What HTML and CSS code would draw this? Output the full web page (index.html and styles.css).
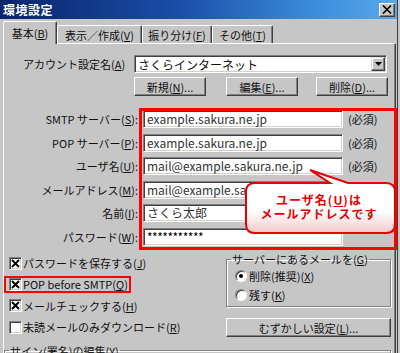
FILE: index.html
```html
<!DOCTYPE html>
<html lang="ja">
<head>
<meta charset="utf-8">
<link rel="stylesheet" href="styles.css">
</head>
<body>
<div class="window">
  <div class="titlebar">
    <span class="title">環境設定</span>
    <span class="close"><svg width="10" height="9" viewBox="0 0 10 9"><path d="M1 0.5 L9 8.5 M9 0.5 L1 8.5" stroke="#000" stroke-width="1.6"/></svg></span>
  </div>
  <div class="tabs">
    <div class="tab sel">基本(<u>B</u>)</div>
    <div class="tab t2">表示／作成(<u>V</u>)</div>
    <div class="tab t3">振り分け(<u>F</u>)</div>
    <div class="tab t4">その他(<u>T</u>)</div>
  </div>
  <div class="panel">
    <div class="acct">
      <span class="acct-label">アカウント設定名(<u>A</u>)</span>
      <div class="combo">
        <span class="combo-text">さくらインターネット</span>
        <span class="dd"><svg width="7" height="4" viewBox="0 0 7 4"><path d="M0 0 H7 L3.5 4 Z" fill="#000"/></svg></span>
      </div>
    </div>
    <div class="btnrow">
      <span class="btn b1">新規(<u>N</u>)...</span>
      <span class="btn b2">編集(<u>E</u>)...</span>
      <span class="btn b3">削除(<u>D</u>)...</span>
    </div>
    <div class="fields">
      <span class="lbl">SMTP サーバー(<u>S</u>):</span><div class="input">example.sakura.ne.jp</div><span class="req">(必須)</span>
      <span class="lbl">POP サーバー(<u>P</u>):</span><div class="input">example.sakura.ne.jp</div><span class="req">(必須)</span>
      <span class="lbl">ユーザ名(<u>U</u>):</span><div class="input">mail@example.sakura.ne.jp</div><span class="req">(必須)</span>
      <span class="lbl">メールアドレス(<u>M</u>):</span><div class="input">mail@example.sakura.ne.jp</div><span class="req">(必須)</span>
      <span class="lbl">名前(<u>I</u>):</span><div class="input">さくら太郎</div><span class="req"></span>
      <span class="lbl">パスワード(<u>W</u>):</span><div class="input pw">***********</div><span class="req"></span>
    </div>
    <div class="lower">
      <div class="checks">
        <div class="chk"><span class="box"><svg width="9" height="9" viewBox="0 0 9 9"><path d="M1 1 L8 8 M8 1 L1 8" stroke="#000" stroke-width="2"/></svg></span>パスワードを保存する(<u>J</u>)</div>
        <div class="chk"><span class="box"><svg width="9" height="9" viewBox="0 0 9 9"><path d="M1 1 L8 8 M8 1 L1 8" stroke="#000" stroke-width="2"/></svg></span>POP before SMTP(<u>Q</u>)</div>
        <div class="chk"><span class="box"><svg width="9" height="9" viewBox="0 0 9 9"><path d="M1 1 L8 8 M8 1 L1 8" stroke="#000" stroke-width="2"/></svg></span>メールチェックする(<u>H</u>)</div>
        <div class="chk"><span class="box"></span>未読メールのみダウンロード(<u>R</u>)</div>
      </div>
      <div class="side">
        <fieldset class="grp">
          <legend>サーバーにあるメールを(<u>G</u>)</legend>
          <div class="radio"><span class="rb on"></span>削除(推奨)(<u>X</u>)</div>
          <div class="radio"><span class="rb"></span>残す(<u>K</u>)</div>
        </fieldset>
        <div class="btn wide">むずかしい設定(<u>L</u>)...</div>
      </div>
    </div>
    <fieldset class="sig"><legend>サイン(署名)の編集(<u>Y</u>)</legend></fieldset>
  </div>
</div>

<div class="hl-main"></div>
<div class="hl-pop"></div>
<div class="callout">
  <svg class="bubble" width="156" height="70" viewBox="0 0 156 70">
    <defs>
      <linearGradient id="cg" x1="0" y1="0" x2="0" y2="1">
        <stop offset="0" stop-color="#ffffff"/>
        <stop offset="0.65" stop-color="#ffffff"/>
        <stop offset="1" stop-color="#f4c8c8"/>
      </linearGradient>
    </defs>
    <path d="M12 17 L87 17 L67 4 L105 17 L143 17 Q152 17 152 26 L152 58 Q152 67 143 67 L12 67 Q3 67 3 58 L3 26 Q3 17 12 17 Z" fill="url(#cg)" stroke="#e80000" stroke-width="2"/>
  </svg>
  <div class="ctext">ユーザ名(<u>U</u>)は<br>メールアドレスです</div>
</div>
</body>
</html>
```

FILE: styles.css
```css
* { box-sizing: border-box; }
html, body { margin: 0; padding: 0; }
body {
  width: 400px;
  height: 353px;
  overflow: hidden;
  background: #c6c6c6;
  font-family: "Noto Sans CJK JP", "Noto Sans", sans-serif;
  font-size: 11px;
  color: #111;
  position: relative;
}
u { text-decoration: underline; text-underline-offset: 1px; }

.window {
  width: 398px;
  height: 353px;
  border-right: 1px solid #404040;
  overflow: hidden;
}

.titlebar {
  height: 19px;
  display: flex;
  align-items: center;
  justify-content: space-between;
  padding: 0 2px 0 3px;
  background: linear-gradient(to right, #0a246a 0%, #1a4ea8 45%, #3c8edc 80%, #5aa8ec 100%);
}
.title {
  color: #fff;
  font-weight: bold;
  font-size: 12px;
  letter-spacing: 0.5px;
  line-height: 19px;
}
.close {
  width: 16px;
  height: 14px;
  background: #c6c6c6;
  border-top: 1px solid #fff;
  border-left: 1px solid #fff;
  border-right: 1px solid #404040;
  border-bottom: 1px solid #404040;
  box-shadow: inset -1px -1px #808080;
  display: flex;
  align-items: center;
  justify-content: center;
}

.tabs {
  display: flex;
  align-items: flex-end;
  height: 22px;
  margin-top: 2px;
  padding-left: 3px;
  position: relative;
  z-index: 2;
}
.tab {
  height: 18px;
  border-top: 1px solid #fff;
  border-left: 1px solid #fff;
  border-right: 1px solid #404040;
  box-shadow: inset -1px 0 #808080;
  border-radius: 2px 2px 0 0;
  display: flex;
  align-items: center;
  justify-content: center;
  padding-top: 1px;
  background: #c6c6c6;
}
.tab.sel {
  width: 54px;
  height: 23px;
  margin-bottom: -1px;
  padding-bottom: 2px;
}
.t2 { width: 85px; }
.t3 { width: 70px; }
.t4 { width: 61px; }

.panel {
  margin-left: 3px;
  width: 393px;
  height: 310px;
  overflow: hidden;
  border-top: 1px solid #fff;
  border-left: 1px solid #fff;
  border-right: 1px solid #404040;
  box-shadow: inset -1px 0 #808080;
  position: relative;
  z-index: 1;
}

.acct {
  display: flex;
  align-items: center;
  margin-top: 11px;
  height: 18px;
}
.acct-label {
  width: 130px;
  padding-left: 19px;
}
.combo {
  width: 253px;
  height: 18px;
  background: #fff;
  border-top: 1px solid #808080;
  border-left: 1px solid #808080;
  border-right: 1px solid #fff;
  border-bottom: 1px solid #fff;
  box-shadow: inset 1px 1px #404040, inset -1px -1px #d4d0c8;
  display: flex;
  align-items: center;
  justify-content: space-between;
  padding: 0 1px 0 3px;
  font-size: 12px;
}
.dd {
  width: 14px;
  height: 14px;
  background: #c6c6c6;
  border-top: 1px solid #e0e0e0;
  border-left: 1px solid #e0e0e0;
  border-right: 1px solid #404040;
  border-bottom: 1px solid #404040;
  box-shadow: inset -1px -1px #808080, inset 1px 1px #fff;
  display: flex;
  align-items: center;
  justify-content: center;
}

.btnrow {
  display: flex;
  margin-top: 4px;
  padding-left: 130px;
  height: 19px;
}
.btn {
  height: 19px;
  width: 72px;
  background: #c6c6c6;
  border-top: 1px solid #fff;
  border-left: 1px solid #fff;
  border-right: 1px solid #404040;
  border-bottom: 1px solid #404040;
  box-shadow: inset -1px -1px #808080;
  display: flex;
  align-items: center;
  justify-content: center;
}
.b2 { margin-left: 20px; }
.b3 { margin-left: 18px; }

.fields {
  display: grid;
  grid-template-columns: 134px 200px auto;
  grid-auto-rows: 18px;
  column-gap: 5px;
  row-gap: 5.6px;
  margin-top: 14px;
  align-items: center;
}
.lbl {
  text-align: right;
  white-space: nowrap;
}
.input {
  height: 18px;
  background: #fff;
  border-top: 1px solid #808080;
  border-left: 1px solid #808080;
  border-right: 1px solid #fff;
  border-bottom: 1px solid #fff;
  box-shadow: inset 1px 1px #404040, inset -1px -1px #d4d0c8;
  padding: 0 3px;
  font-size: 12px;
  line-height: 16px;
  color: #333;
  white-space: nowrap;
  overflow: hidden;
}
.input.pw { letter-spacing: -0.5px; color: #000; }
.req { padding-left: 0; }

.lower {
  display: flex;
  margin-top: 6.5px;
}
.checks {
  width: 222px;
  display: flex;
  flex-direction: column;
}
.chk {
  height: 21.3px;
  display: flex;
  align-items: center;
  padding-left: 5px;
  white-space: nowrap;
}
.box {
  width: 13px;
  height: 13px;
  background: #fff;
  border-top: 1px solid #808080;
  border-left: 1px solid #808080;
  border-right: 1px solid #fff;
  border-bottom: 1px solid #fff;
  box-shadow: inset 1px 1px #404040, inset -1px -1px #d4d0c8;
  display: flex;
  align-items: center;
  justify-content: center;
  margin-right: 1px;
  flex: none;
}
.side {
  width: 165px;
  display: flex;
  flex-direction: column;
}
.grp {
  margin: 0;
  padding: 0 0 4px 8px;
  height: 55px;
  border: 1px solid #808080;
  box-shadow: 1px 1px #fff, inset 1px 1px #fff;
}
.grp legend, .sig legend {
  padding: 0 1px;
  margin-left: -4px;
  line-height: 14px;
  white-space: nowrap;
}
.radio {
  height: 19px;
  display: flex;
  align-items: center;
  white-space: nowrap;
}
.rb {
  width: 12px;
  height: 12px;
  border-radius: 50%;
  background: #fff;
  border: 1px solid #808080;
  border-right-color: #fff;
  border-bottom-color: #fff;
  box-shadow: inset 1px 1px #404040;
  margin-right: 2px;
  position: relative;
  flex: none;
}
.rb.on::after {
  content: "";
  position: absolute;
  left: 3px;
  top: 3px;
  width: 4px;
  height: 4px;
  border-radius: 50%;
  background: #000;
}
.btn.wide {
  width: 165px;
  margin-top: 11px;
}
.sig {
  margin: 6px 0 0 0;
  padding: 0 0 0 8px;
  width: 387px;
  height: 16px;
  border: 1px solid #808080;
  box-shadow: 1px 1px #fff, inset 1px 1px #fff;
}

.hl-main {
  position: absolute;
  left: 139px;
  top: 108px;
  width: 258px;
  height: 142px;
  border: 3px solid #f00;
  z-index: 5;
}
.hl-pop {
  position: absolute;
  left: 4px;
  top: 276px;
  width: 127px;
  height: 17px;
  border: 2px solid #f00;
  z-index: 5;
}
.callout {
  position: absolute;
  left: 243px;
  top: 166px;
  width: 156px;
  height: 70px;
  z-index: 6;
}
.bubble { display: block; }
.ctext {
  position: absolute;
  left: 0;
  top: 27px;
  width: 152px;
  text-align: center;
  color: #e60000;
  font-weight: bold;
  font-size: 12px;
  line-height: 14px;
  letter-spacing: 1px;
}
```
